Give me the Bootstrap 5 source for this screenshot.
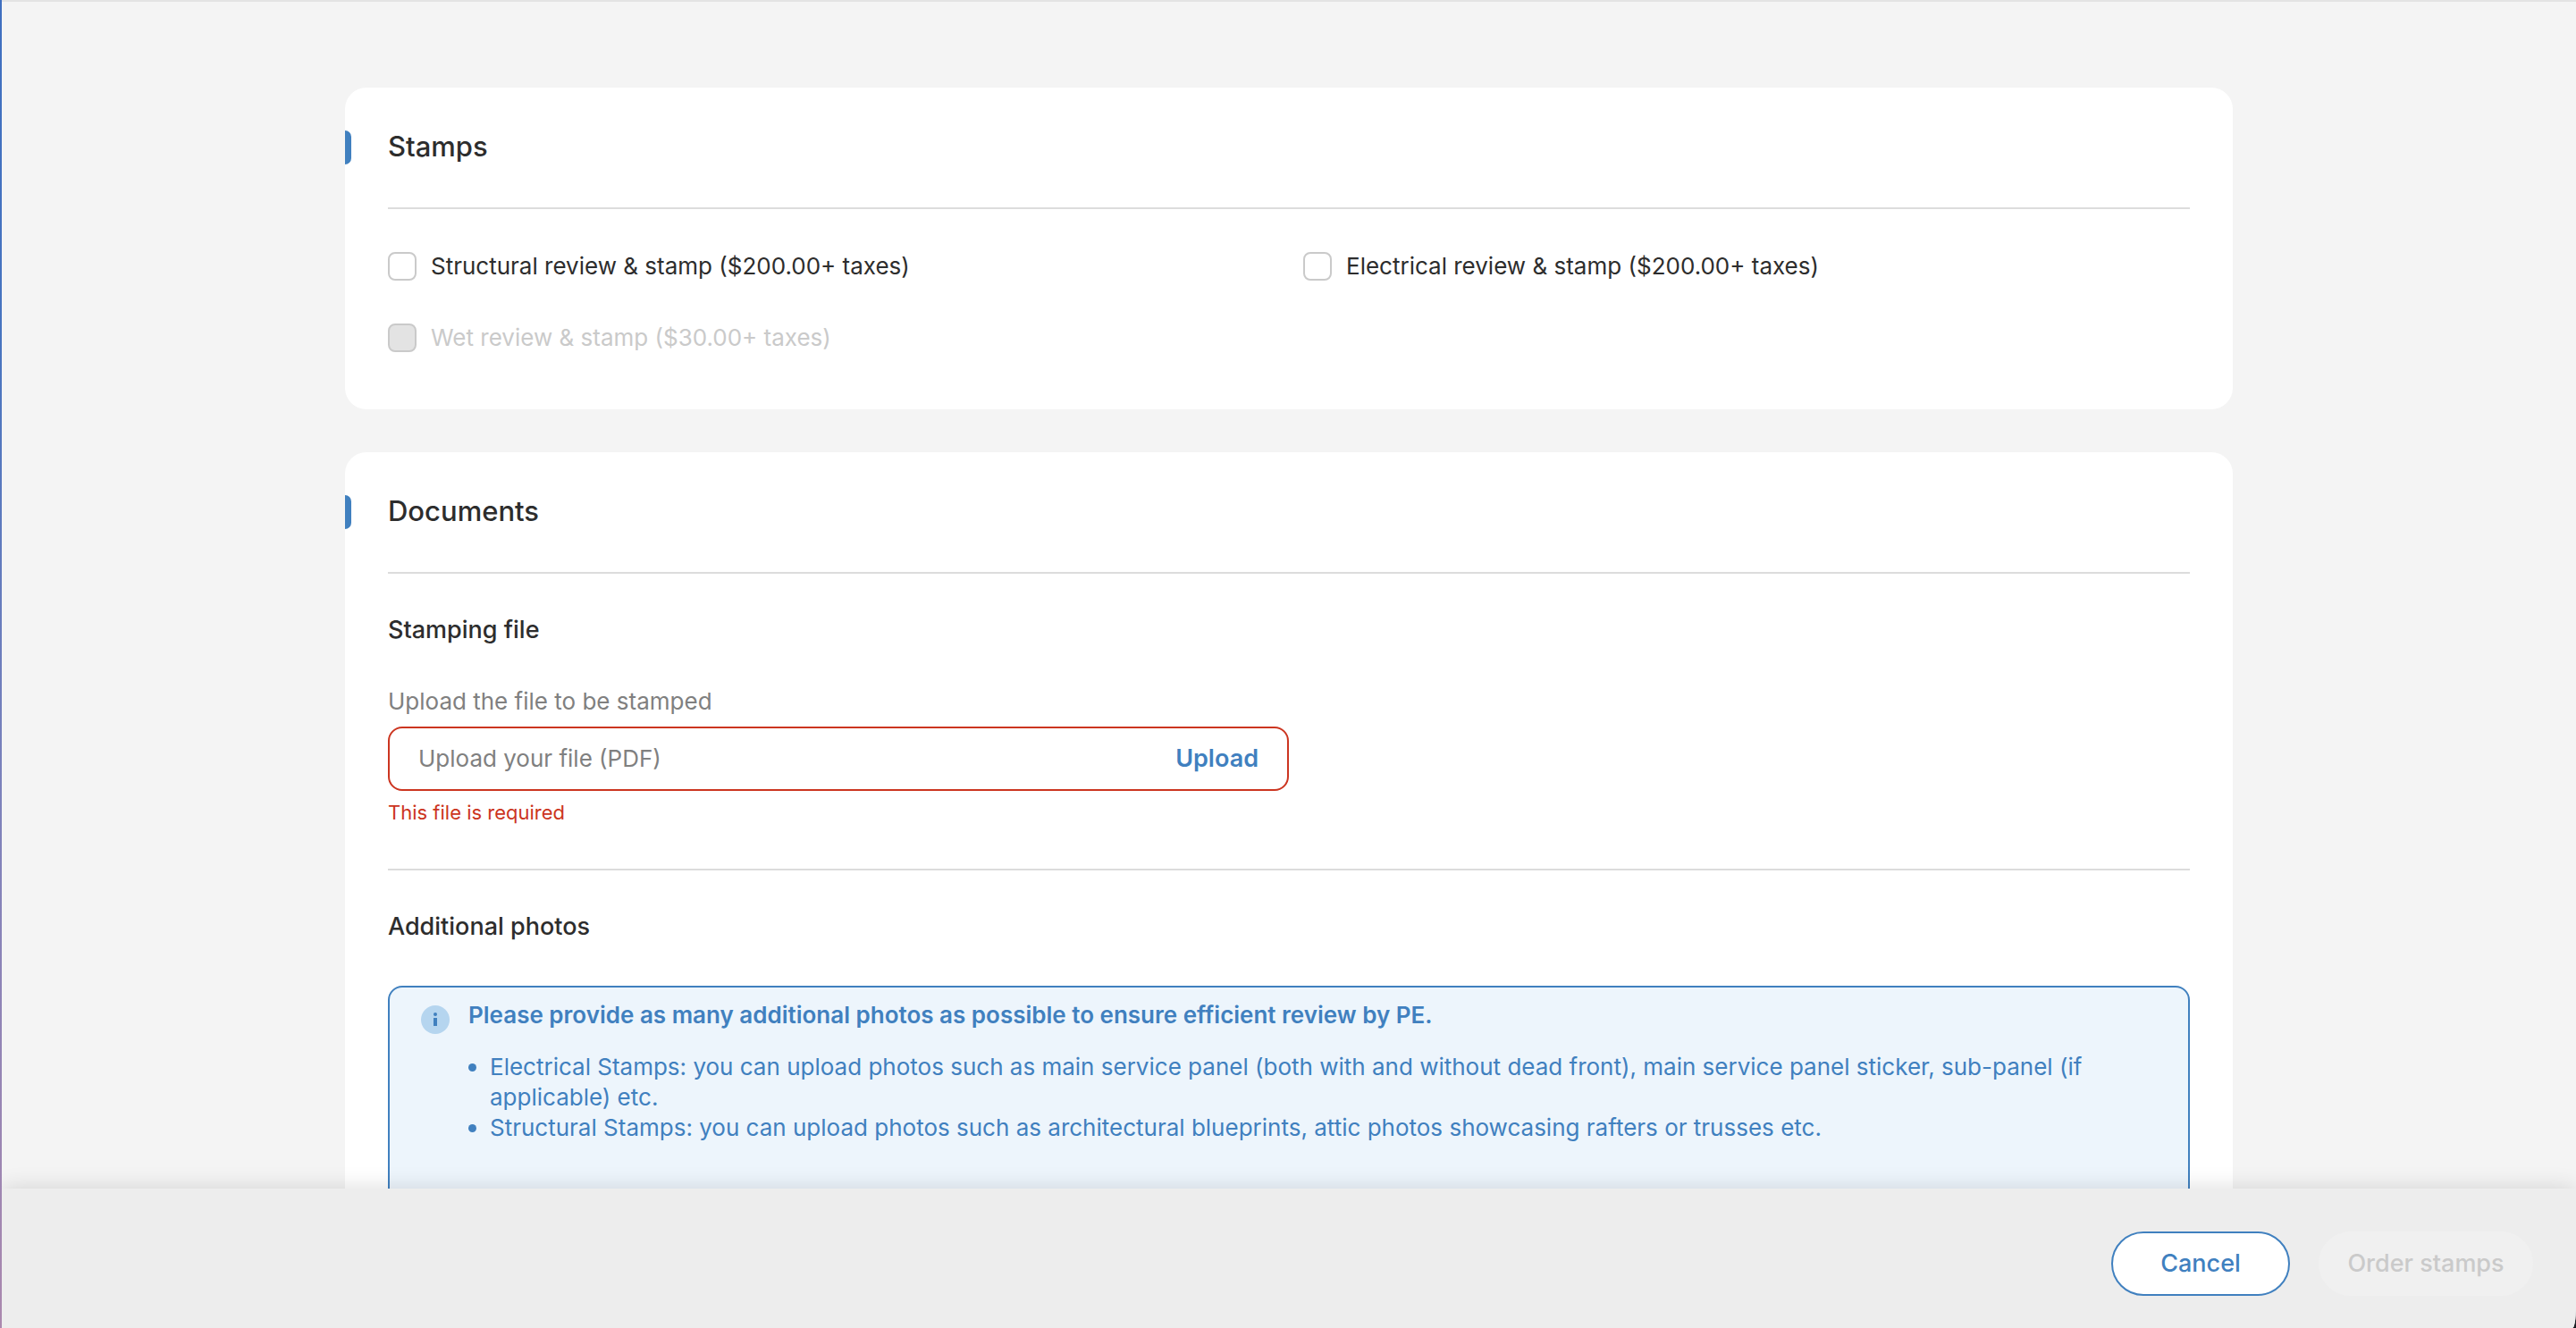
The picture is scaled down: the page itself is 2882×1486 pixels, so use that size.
<!DOCTYPE html>
<html lang="en">
<head>
<meta charset="utf-8">
<meta name="viewport" content="width=device-width, initial-scale=1">
<title>Order stamps</title>
<link href="https://cdn.jsdelivr.net/npm/bootstrap@5.3.0/dist/css/bootstrap.min.css" rel="stylesheet">
<style>
  :root { --brand: #4080bf; --ink: #2d2d2d; --muted: #808080; --rule: #dcdcdc; --danger: #cc3520; }
  body { font-family: Inter, "Liberation Sans", sans-serif; font-size: 26px; line-height: 34px; color: var(--ink); background: #1c1f24; }
  .edge-strip { width: 2px; background: linear-gradient(#3f6fc0, #4774bf 25%, #7d82bb 60%, #ab88ae); }
  .app-shell { border-top: 2px solid #e3e3e3; min-width: 0; background: #f4f4f4; border-bottom-right-radius: 4px 23px; }
  .scroll-area { min-height: 0; padding: 96px 48px; scrollbar-width: none; }
  .panel-stack { max-width: 2112px; gap: 48px; }
  .panel { background: #fff; border-radius: 24px; padding: 0 48px 64px; }
  .panel-head { padding: 48px 0 50px; border-bottom: 2px solid var(--rule); position: relative; }
  .panel-head::before { content: ""; position: absolute; left: -48px; top: 48px; width: 7px; height: 38px; background: var(--brand); border-radius: 0 8px 8px 0; }
  .panel-head h2 { font-size: 31px; line-height: 36px; font-weight: 500; margin: 0; }
  .section-title { font-size: 27px; line-height: 30px; font-weight: 500; margin: 0; padding-bottom: 4px; }
  .stamp-grid { padding-top: 48px; row-gap: 48px; --bs-gutter-x: 32px; }
  .stamp-option { gap: 16px; line-height: 32px; }
  .stamp-option .form-check-input { width: 32px; height: 32px; margin: 0; border: 2px solid #cacaca; border-radius: 8px; flex: none; }
  .stamp-option .form-check-input:disabled { background: #e3e3e3; opacity: 1; }
  .stamp-option .form-check-input:disabled ~ label { color: #cacaca; opacity: 1; }
  .doc-block { padding: 48px 0; }
  .doc-block + .doc-block { border-top: 2px solid var(--rule); }
  .upload-label { color: var(--muted); margin-top: 44px; margin-bottom: 11px; }
  .upload-box { width: 50%; height: 72px; border: 2px solid var(--danger); border-radius: 16px; padding: 0 32px; }
  .upload-box input { border: 0; padding: 0; background: none; font-size: 26px; color: var(--ink); min-width: 0; outline: 0; }
  .upload-box input::placeholder { color: var(--muted); opacity: 1; }
  .upload-box button { border: 0; padding: 0; font-size: 27px; font-weight: 600; color: var(--brand); }
  .upload-error { font-size: 22px; line-height: 30px; color: var(--danger); margin-top: 9px; }
  .tip-box { margin-top: 47px; border: 2px solid var(--brand); border-radius: 16px; background: #edf5fc; color: var(--brand); padding: 14px 96px 96px 35px; gap: 21px; }
  .tip-box svg { width: 32px; height: 32px; flex: none; margin-top: 6px; }
  .tip-box strong { font-size: 26px; font-weight: 600; }
  .tip-box ul { list-style: none; margin: 24px 0 0; padding: 0; }
  .tip-box li { position: relative; padding-left: 24px; }
  .tip-box li::before { content: ""; position: absolute; left: 0; top: 13px; width: 9px; height: 9px; border-radius: 50%; background: var(--brand); }
  .action-bar { background: #ededed; padding: 48px 48px 36px; gap: 32px; box-shadow: 0 0 24px rgba(0,0,0,.14); z-index: 1; }
  .action-bar .btn { height: 72px; border-width: 2px; border-radius: 36px; font-size: 27px; font-weight: 500; padding: 0 28px; }
  .btn-cancel, .btn-cancel:hover { min-width: 200px; background: #fff; color: var(--brand); border-color: var(--brand); }
  .action-bar .btn-order:disabled { min-width: 240px; background: #f0f0f0; color: #cacaca; border-color: #f0f0f0; opacity: 1; }
</style>
</head>
<body>
<div class="d-flex vh-100 overflow-hidden">
  <div class="edge-strip flex-shrink-0"></div>
  <div class="app-shell d-flex flex-column flex-grow-1 overflow-hidden">
    <main class="scroll-area flex-grow-1 overflow-auto">
      <div class="panel-stack d-flex flex-column mx-auto">
        <section class="panel">
          <div class="panel-head"><h2>Stamps</h2></div>
          <div class="row stamp-grid">
            <div class="col-6 d-flex stamp-option">
              <input class="form-check-input" type="checkbox" id="structural">
              <label for="structural">Structural review &amp; stamp ($200.00+ taxes)</label>
            </div>
            <div class="col-6 d-flex stamp-option">
              <input class="form-check-input" type="checkbox" id="electrical">
              <label for="electrical">Electrical review &amp; stamp ($200.00+ taxes)</label>
            </div>
            <div class="col-6 d-flex stamp-option">
              <input class="form-check-input" type="checkbox" id="wet" disabled>
              <label for="wet">Wet review &amp; stamp ($30.00+ taxes)</label>
            </div>
          </div>
        </section>
        <section class="panel">
          <div class="panel-head"><h2>Documents</h2></div>
          <div class="doc-block">
            <h3 class="section-title">Stamping file</h3>
            <label class="upload-label d-block" for="stampfile">Upload the file to be stamped</label>
            <div class="upload-box d-flex align-items-center">
              <input class="flex-grow-1" type="text" id="stampfile" placeholder="Upload your file (PDF)" readonly>
              <button class="btn" type="button">Upload</button>
            </div>
            <div class="upload-error">This file is required</div>
          </div>
          <div class="doc-block">
            <h3 class="section-title">Additional photos</h3>
            <div class="tip-box d-flex align-items-start">
              <svg viewBox="0 0 32 32" aria-hidden="true"><circle cx="16" cy="16" r="16" fill="#b5d5ef"/><circle cx="16" cy="10" r="2" fill="#4080bf"/><rect x="14" y="14" width="4" height="9" fill="#4080bf"/></svg>
              <div>
                <strong>Please provide as many additional photos as possible to ensure efficient review by PE.</strong>
                <ul>
                  <li>Electrical Stamps: you can upload photos such as main service panel (both with and without dead front), main service panel sticker, sub-panel (if applicable) etc.</li>
                  <li>Structural Stamps: you can upload photos such as architectural blueprints, attic photos showcasing rafters or trusses etc.</li>
                </ul>
              </div>
            </div>
          </div>
        </section>
      </div>
    </main>
    <footer class="action-bar d-flex justify-content-end">
      <button class="btn btn-cancel" type="button">Cancel</button>
      <button class="btn btn-order" type="button" disabled>Order stamps</button>
    </footer>
  </div>
</div>
<script src="https://cdn.jsdelivr.net/npm/bootstrap@5.3.0/dist/js/bootstrap.bundle.min.js"></script>
</body>
</html>
